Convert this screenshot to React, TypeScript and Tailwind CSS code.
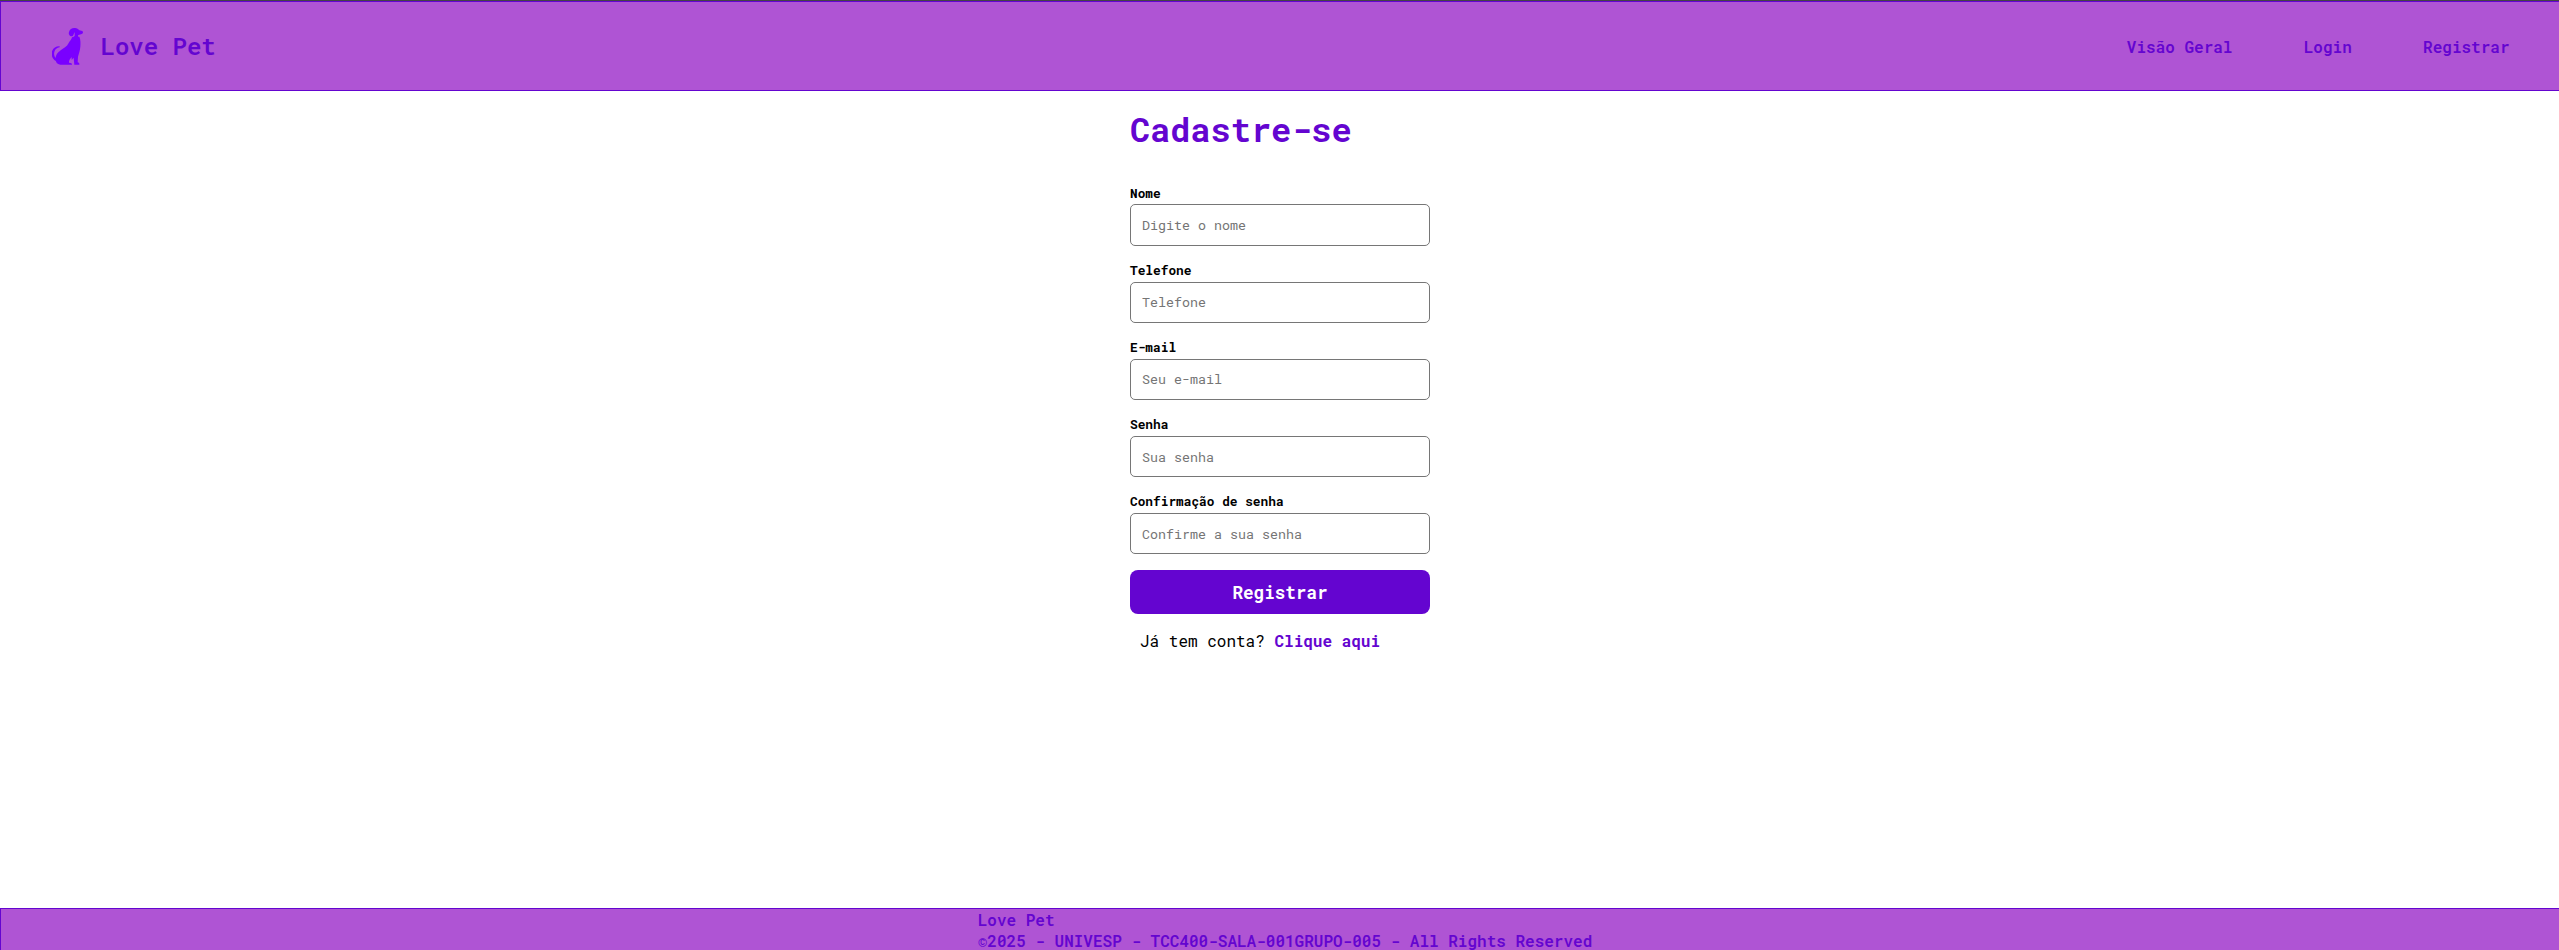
const fields = [
  { id: "name", label: "Nome", type: "text", placeholder: "Digite o nome" },
  { id: "phone", label: "Telefone", type: "text", placeholder: "Telefone" },
  { id: "email", label: "E-mail", type: "email", placeholder: "Seu e-mail" },
  { id: "password", label: "Senha", type: "password", placeholder: "Sua senha" },
  { id: "confirm", label: "Confirmação de senha", type: "password", placeholder: "Confirme a sua senha" },
];

function DogLogo() {
  return (
    <svg viewBox="12 9 96 114" className="h-[38px] w-8" fill="#7a00ff" aria-hidden="true">
      <path d="M63 24C65 15 73 11 81 12C87 12 91 15 94 19L103 21C107 24 105 30 99 31L91 33C88 36 91 39 94 41L72 41L80 36L80 24L75 35C71 38 66 37 64 33C62 30 62 27 63 24Z" />
      <path d="M72 40L94 38C98 46 98 58 97 68C96 80 92 90 90 98L89 115C93 116 95 119 94 122H79L77 101L71 108V99C66 105 62 110 63 116C69 116 73 118 72 122H37C27 121 23 115 23 106C22 94 29 86 38 79C46 73 57 68 62 57C65 51 71 47 72 40Z" />
      <path d="M35 67C25 66 13 73 11 86C10 97 15 106 24 111L25 104C19 99 17 91 19 84C21 76 27 71 35 70Z" />
    </svg>
  );
}

export default function App() {
  return (
    <div className="flex h-[950px] flex-col overflow-hidden bg-white font-['Roboto_Mono','Liberation_Mono',monospace] text-base text-black">
      <header className="flex h-[91px] shrink-0 items-center justify-between border-t border-[#444444] bg-[#af54d4]">
        <div className="flex h-[90px] w-full items-center justify-between border border-r-0 border-[#6405d0] pr-[49.500px] pl-[51px] text-[#6405d0]">
          <a className="flex items-center gap-[16.500px]">
            <DogLogo />
            <span className="text-2xl font-semibold">Love Pet</span>
          </a>
          <nav className="flex gap-[71.300px] pt-0.5 font-semibold">
            <a>Visão Geral</a>
            <a>Login</a>
            <a>Registrar</a>
          </nav>
        </div>
      </header>

      <main className="flex flex-1 justify-center pl-px">
        <form className="w-[300px]">
          <h1 className="pt-4 text-[33.6px] leading-[45px] font-bold text-[#6405d0]">Cadastre-se</h1>
          <div className="mt-[32.400px] flex flex-col gap-4">
            {fields.map((f) => (
              <div key={f.id} className="group flex flex-col">
                <label htmlFor={f.id} className="h-5 text-[12.8px] leading-[17.400px] font-bold group-first:leading-[19px]">
                  {f.label}
                </label>
                <input
                  id={f.id}
                  type={f.type}
                  placeholder={f.placeholder}
                  className="h-[41.2px] rounded-[5px] border border-[#767676] px-[11px] text-[13.333px] placeholder:text-[#757575]"
                />
              </div>
            ))}
          </div>
          <button type="button" className="mt-[15.600px] h-11 w-full rounded-lg bg-[#6405d0] pt-0.5 text-[17.6px] font-bold text-white">
            Registrar
          </button>
          <p className="mt-[15px] pl-[10px]">
            Já tem conta? <a className="font-bold text-[#6405d0]">Clique aqui</a>
          </p>
        </form>
      </main>

      <footer className="flex h-[42px] shrink-0 justify-center overflow-hidden border-t border-l border-[#6405d0] bg-[#af54d4] pl-[10px] leading-[21px] font-semibold text-[#6405d0]">
        <div className="h-[41px] whitespace-nowrap">
          <p>Love Pet</p>
          <p>©2025 - UNIVESP - TCC400-SALA-001GRUPO-005 - All Rights Reserved</p>
        </div>
      </footer>
    </div>
  );
}
